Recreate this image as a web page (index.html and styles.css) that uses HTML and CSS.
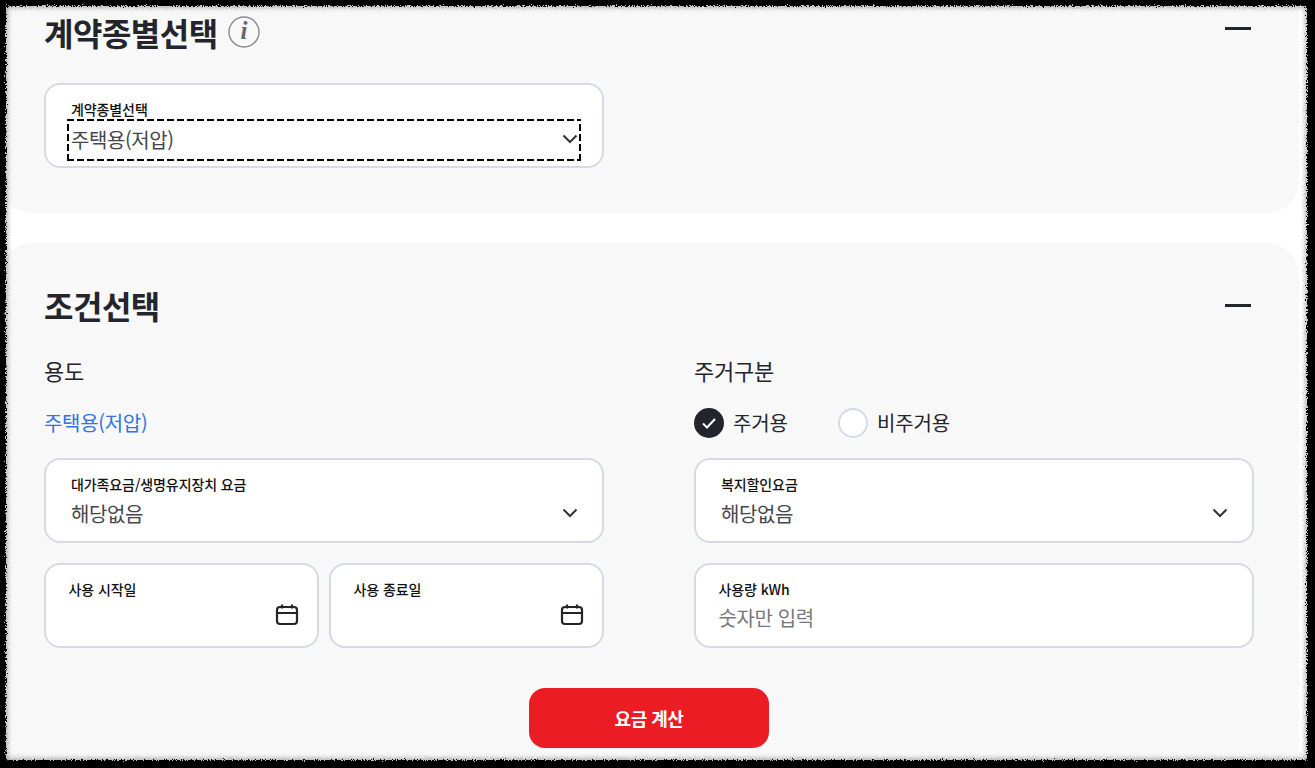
FILE: index.html
```html
<!DOCTYPE html>
<html lang="ko">
<head>
    <meta charset="UTF-8">
    <meta name="viewport" content="width=device-width, initial-scale=1.0">
    <title>요금 계산</title>
    <link rel="stylesheet" href="styles.css">
</head>
<body>
    <svg class="filter-defs" width="0" height="0" aria-hidden="true">
        <filter id="rough" x="-2%" y="-2%" width="104%" height="104%">
            <feTurbulence type="fractalNoise" baseFrequency="0.9" numOctaves="2" seed="4"/>
            <feDisplacementMap in="SourceGraphic" scale="6"/>
            <feGaussianBlur stdDeviation="0.4"/>
        </filter>
    </svg>

    <main class="page">
        <section class="card card-first">
            <div class="card-head">
                <h2>계약종별선택</h2>
                <span class="info-icon">
                    <svg width="32" height="32" viewBox="0 0 32 32">
                        <circle cx="16" cy="16" r="15" fill="none" stroke="#8a8a8e" stroke-width="1.4"/>
                        <text x="16" y="23" text-anchor="middle" class="info-letter">i</text>
                    </svg>
                </span>
                <span class="collapse-bar"></span>
            </div>
            <div class="field field-half">
                <label class="field-label">계약종별선택</label>
                <div class="field-value focused">
                    <span>주택용(저압)</span>
                    <svg class="chevron" width="16" height="10" viewBox="0 0 16 10"><path d="M1.500 1.500 8 8l6.500-6.500" fill="none" stroke="#333338" stroke-width="2"/></svg>
                </div>
            </div>
        </section>

        <section class="card card-second">
            <div class="card-head">
                <h2>조건선택</h2>
                <span class="collapse-bar"></span>
            </div>
            <div class="columns">
                <div class="column">
                    <h3>용도</h3>
                    <p class="usage">주택용(저압)</p>
                    <div class="field">
                        <label class="field-label">대가족요금/생명유지장치 요금</label>
                        <div class="field-value">
                            <span>해당없음</span>
                            <svg class="chevron" width="16" height="10" viewBox="0 0 16 10"><path d="M1.500 1.500 8 8l6.500-6.500" fill="none" stroke="#333338" stroke-width="2"/></svg>
                        </div>
                    </div>
                    <div class="date-row">
                        <div class="field field-date">
                            <label class="field-label">사용 시작일</label>
                            <svg class="calendar" width="24" height="24" viewBox="0 0 24 24"><g fill="none" stroke="#24252c" stroke-width="2.200"><rect x="2" y="4" width="20" height="17" rx="3"/><path d="M2 10h20M7 1.500v4M17 1.500v4"/></g></svg>
                        </div>
                        <div class="field field-date">
                            <label class="field-label">사용 종료일</label>
                            <svg class="calendar" width="24" height="24" viewBox="0 0 24 24"><g fill="none" stroke="#24252c" stroke-width="2.200"><rect x="2" y="4" width="20" height="17" rx="3"/><path d="M2 10h20M7 1.500v4M17 1.500v4"/></g></svg>
                        </div>
                    </div>
                </div>
                <div class="column">
                    <h3>주거구분</h3>
                    <div class="radio-row">
                        <div class="radio-item">
                            <span class="radio checked">
                                <svg width="16" height="16" viewBox="0 0 16 16"><path d="M2 8.500l4 4 8-8.500" fill="none" stroke="#fff" stroke-width="2"/></svg>
                            </span>
                            <span class="radio-text">주거용</span>
                        </div>
                        <div class="radio-item">
                            <span class="radio"></span>
                            <span class="radio-text">비주거용</span>
                        </div>
                    </div>
                    <div class="field">
                        <label class="field-label">복지할인요금</label>
                        <div class="field-value">
                            <span>해당없음</span>
                            <svg class="chevron" width="16" height="10" viewBox="0 0 16 10"><path d="M1.500 1.500 8 8l6.500-6.500" fill="none" stroke="#333338" stroke-width="2"/></svg>
                        </div>
                    </div>
                    <div class="field field-amount">
                        <label class="field-label">사용량 kWh</label>
                        <div class="field-value placeholder">숫자만 입력</div>
                    </div>
                </div>
            </div>
            <div class="actions">
                <button type="button" class="calc-btn">요금 계산</button>
            </div>
        </section>
    </main>

    <div class="frame"></div>
</body>
</html>
```

FILE: styles.css
```css
:root {
    --text-color: #24252c;
    --card-background: #f8f8f8;
    --border-color: #d6dae6;
    --blue: #3272e6;
    --red: #eb1c24;
}

* {
    margin: 0;
    padding: 0;
    box-sizing: border-box;
}

html, body {
    height: 768px;
    overflow: hidden;
}

body {
    font-family: "Noto Sans CJK KR", "Noto Sans", sans-serif;
    color: var(--text-color);
    background-color: #fff;
}

.filter-defs {
    position: absolute;
}

.page {
    width: 1299px;
    height: 768px;
    overflow: hidden;
}

.card {
    background: var(--card-background);
    border-radius: 32px;
    padding: 38px 45px 60px 44px;
    margin-bottom: 30px;
}

.card-first {
    height: 213px;
    padding-top: 8px;
    border-radius: 0 0 32px 32px;
}

.card-head {
    display: flex;
    align-items: center;
    height: 48px;
    gap: 10px;
}

h2 {
    font-size: 32px;
    font-weight: 700;
    line-height: 48px;
    letter-spacing: -0.5px;
}

.info-icon {
    display: flex;
}

.info-letter {
    font-family: "Liberation Serif", serif;
    font-size: 25px;
    font-weight: 700;
    font-style: italic;
    fill: #66666c;
}

.collapse-bar {
    width: 26px;
    height: 3px;
    margin-left: auto;
    margin-right: 3px;
    margin-top: -8px;
    background: var(--text-color);
}

.card-second .collapse-bar {
    margin-top: 0;
}

.field {
    height: 85px;
    background: #fff;
    border: 2px solid var(--border-color);
    border-radius: 16px;
    padding: 14px 21px 0 25px;
}

.field-half {
    width: 560px;
    margin-top: 27px;
}

.field-label {
    display: block;
    font-size: 14px;
    font-weight: 500;
    line-height: 20px;
    letter-spacing: -0.1px;
    color: #111;
}

.field-value {
    display: flex;
    align-items: center;
    justify-content: space-between;
    height: 38px;
    font-size: 20px;
    letter-spacing: -0.4px;
    color: #45464c;
}

/* keyboard focus box, dashes drawn by hand so they come out long like the original */
.field-value.focused {
    height: 42px;
    width: 514px;
    margin-left: -4px;
    padding: 0 0 2px 4px;
    background-image:
        repeating-linear-gradient(90deg, #000 0 7px, transparent 7px 10px),
        repeating-linear-gradient(90deg, #000 0 7px, transparent 7px 10px),
        repeating-linear-gradient(0deg, #000 0 7px, transparent 7px 10px),
        repeating-linear-gradient(0deg, #000 0 7px, transparent 7px 10px);
    background-size: 100% 2px, 100% 2px, 2px 100%, 2px 100%;
    background-position: 0 0, 0 100%, 0 0, 100% 0;
    background-repeat: no-repeat;
}

.chevron {
    flex: none;
    margin-right: 3px;
}

.columns {
    display: grid;
    grid-template-columns: 560px 560px;
    gap: 90px;
    margin-top: 25px;
}

h3 {
    font-size: 22px;
    font-weight: 400;
    line-height: 32px;
    letter-spacing: -0.2px;
}

.usage {
    height: 30px;
    margin-top: 22px;
    margin-bottom: 20px;
    font-size: 20px;
    font-weight: 400;
    line-height: 30px;
    letter-spacing: -0.3px;
    color: var(--blue);
}

.radio-row {
    display: flex;
    gap: 50px;
    height: 30px;
    margin-top: 22px;
    margin-bottom: 20px;
}

.radio-item {
    display: flex;
    align-items: center;
    gap: 9px;
    font-size: 20px;
    letter-spacing: -0.1px;
}

.radio-text {
    margin-top: -2px;
}

.radio {
    display: flex;
    align-items: center;
    justify-content: center;
    width: 30px;
    height: 30px;
    background: #fff;
    border: 2px solid var(--border-color);
    border-radius: 50%;
}

.radio.checked {
    background: var(--text-color);
    border-color: var(--text-color);
}

.date-row {
    display: grid;
    grid-template-columns: 1fr 1fr;
    gap: 10px;
    margin-top: 20px;
}

.field-date {
    position: relative;
    padding-left: 22.5px;
}

.calendar {
    position: absolute;
    right: 18px;
    bottom: 19px;
}

.field-amount {
    margin-top: 20px;
    padding-left: 22.5px;
}

.placeholder {
    color: #77787e;
    margin-top: -1px;
}

.actions {
    display: flex;
    justify-content: center;
    margin-top: 40px;
}

.calc-btn {
    width: 240px;
    height: 60px;
    border: none;
    border-radius: 16px;
    background: var(--red);
    color: #fff;
    font-family: inherit;
    font-size: 18px;
    font-weight: 700;
    letter-spacing: -0.5px;
}

/* black rough edge of the capture, lies over everything */
.frame {
    position: absolute;
    top: -20px;
    left: -20px;
    width: 1355px;
    height: 808px;
    border: solid #000;
    border-width: 26px 28px 28px 26px;
    border-radius: 30px;
    box-shadow: inset 0 0 4px 2px rgba(0, 0, 0, 0.3);
    filter: url(#rough);
    pointer-events: none;
}
```
